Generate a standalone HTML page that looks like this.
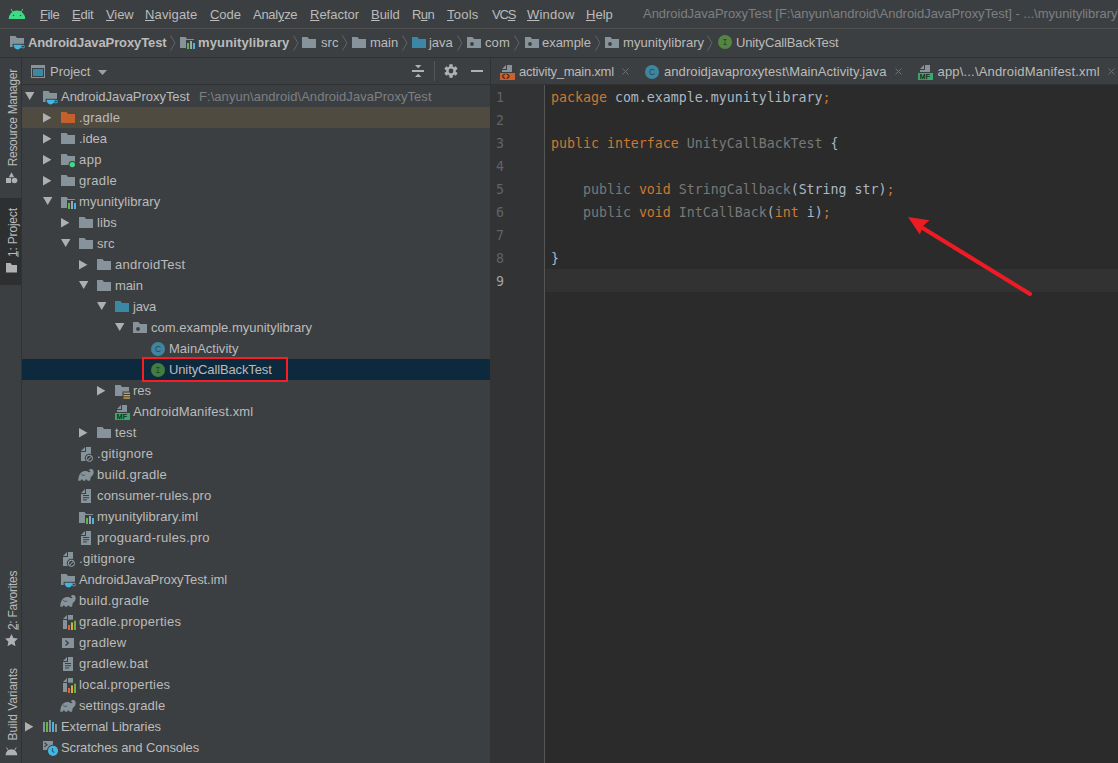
<!DOCTYPE html>
<html><head><meta charset="utf-8"><title>AndroidJavaProxyTest</title>
<style>
html,body{margin:0;padding:0;background:#3c3f41;}
body{width:1118px;height:763px;position:relative;overflow:hidden;font-family:"Liberation Sans",sans-serif;font-size:13px;color:#bbbbbb;}
.abs{position:absolute}
svg{display:block}
u{text-decoration:underline;text-underline-offset:1px}
#menubar{position:absolute;left:0;top:0;width:1118px;height:28px;background:#3c3f41;border-bottom:1px solid #515151;}
.mi{position:absolute;top:7px;white-space:nowrap;line-height:16px;font-size:13px}
#title{position:absolute;left:643px;top:6px;white-space:nowrap;line-height:16px;color:#7d7f81;font-size:13px;letter-spacing:-0.030px}
#navbar{position:absolute;left:0;top:29px;width:1118px;height:28px;background:#3c3f41;border-bottom:1px solid #323232;}
.ico{position:absolute;top:3px;width:16px;height:16px}
.nt{position:absolute;top:6px;line-height:16px;white-space:nowrap;font-size:13px}
.nt.b{font-weight:bold}
.sep{position:absolute;top:6px}
#strip{position:absolute;left:0;top:58px;width:21px;height:705px;background:#3c3f41;border-right:1px solid #323232}
.vt{position:absolute;left:0;width:21px;white-space:nowrap;font-size:12px;line-height:21px;transform-origin:0 0;transform:rotate(-90deg);}
#proj{position:absolute;left:22px;top:58px;width:468px;height:705px;background:#3c3f41;}
#projhdr{position:absolute;left:22px;top:58px;width:468px;height:26px;border-bottom:1px solid #323232}
#tree{position:absolute;left:0;top:0;width:490px;height:763px;}
.row{position:absolute;left:22px;width:468px;height:21px;}
.row > *{margin-left:-22px}
.row.excl{background:#4f4b41}
.row.sel{background:#0d293e}
.lbl{position:absolute;top:3px;line-height:16px;white-space:nowrap;font-size:13px}
.dim{color:#7d8082}
.arw{position:absolute}
#divider{position:absolute;left:490px;top:58px;width:1px;height:705px;background:#323232}
#editor{position:absolute;left:491px;top:58px;width:627px;height:705px;background:#2b2b2b}
#tabs{position:absolute;left:0;top:0;width:627px;height:26px;background:#3c3f41;border-bottom:1px solid #323232}
.tab{position:absolute;top:6px;line-height:16px;white-space:nowrap;font-size:13px}
.tx{position:absolute;top:10px}
#gutter{position:absolute;left:491px;top:85px;width:53px;height:678px;background:#313335;border-right:1px solid #555555}
.num{position:absolute;left:496px;width:30px;height:23px;line-height:23px;font-family:"DejaVu Sans Mono","Liberation Mono",monospace;font-size:13.280px;color:#606366}
.num.cur{color:#a4a3a3}
#caret{position:absolute;left:491px;top:269px;width:627px;height:23px;background:#323232}
.cl{position:absolute;left:551px;height:23px;line-height:23px;white-space:pre;font-family:"DejaVu Sans Mono","Liberation Mono",monospace;font-size:13.280px;color:#a9b7c6}
.k{color:#cc7832}
.g{color:#787878}
</style></head><body>
<div id="menubar"><svg width="20" height="13" viewBox="7 8 20 13" style="position:absolute;left:7px;top:8px"><path d="M8.7 19.1a8.250 8.5 0 0 1 16.5 0z" fill="#3ddc84"/><path d="M12.900 12.4L11.3 9.3M21.000 12.4L22.6 9.3" stroke="#3ddc84" stroke-width="0.900" stroke-linecap="round"/><circle cx="13.5" cy="15.4" r="0.750" fill="#3c3f41"/><circle cx="20.5" cy="15.4" r="0.750" fill="#3c3f41"/></svg><span class="mi" id="m0" style="left:40px;letter-spacing:-0.442px"><u>F</u>ile</span><span class="mi" id="m1" style="left:72px;letter-spacing:-0.227px"><u>E</u>dit</span><span class="mi" id="m2" style="left:106px;letter-spacing:-0.088px"><u>V</u>iew</span><span class="mi" id="m3" style="left:145px;letter-spacing:0.136px"><u>N</u>avigate</span><span class="mi" id="m4" style="left:210px;letter-spacing:-0.048px"><u>C</u>ode</span><span class="mi" id="m5" style="left:253px;letter-spacing:-0.281px">Anal<u>y</u>ze</span><span class="mi" id="m6" style="left:310px;letter-spacing:-0.005px"><u>R</u>efactor</span><span class="mi" id="m7" style="left:371px;letter-spacing:-0.044px"><u>B</u>uild</span><span class="mi" id="m8" style="left:412px;letter-spacing:-0.586px">R<u>u</u>n</span><span class="mi" id="m9" style="left:447px;letter-spacing:0.248px"><u>T</u>ools</span><span class="mi" id="m10" style="left:492px;letter-spacing:-1.145px">VC<u>S</u></span><span class="mi" id="m11" style="left:527px;letter-spacing:0.208px"><u>W</u>indow</span><span class="mi" id="m12" style="left:586px;letter-spacing:0.012px"><u>H</u>elp</span><span id="title">AndroidJavaProxyTest [F:\anyun\android\AndroidJavaProxyTest] - ...\myunitylibrary\src\main\java\com\example\myunitylibrary\UnityCallBackTest.java</span></div>
<div id="navbar"><span class="ico" style="left:9px;top:5px"><svg class="ic" width="16" height="16" viewBox="0 0 16 16" style=""><path d="M1 2h5.5l1.5 2H15v9H1z" fill="#87939a"/><path d="M3.6 9.800H16v6.2H3.6z" fill="#3c3f41"/><path d="M4.6 10.800h8c0 2.7-1.6 4.7-4 4.7s-4-2-4-4.7z" fill="#40b6e0"/><ellipse cx="13.800" cy="12.6" rx="1.800" ry="1.3" fill="none" stroke="#40b6e0" stroke-width="0.900"/></svg></span><span class="nt b" id="n0" style="left:28px;letter-spacing:-0.107px">AndroidJavaProxyTest</span><span class="ico" style="left:179px;top:6px"><svg class="ic" width="16" height="16" viewBox="0 0 16 16" style=""><path d="M1 2h5.5l1.5 2H15v9H1z" fill="#87939a"/><rect x="7" y="5" width="9" height="9" fill="#3c3f41"/><rect x="8" y="8" width="2" height="6" fill="#62b543"/><rect x="11" y="6" width="2" height="8" fill="#9aa7b0"/><rect x="14" y="8" width="2" height="6" fill="#40b6e0"/></svg></span><span class="nt b" id="n1" style="left:198px;letter-spacing:0.136px">myunitylibrary</span><span class="ico" style="left:301px;top:6px"><svg class="ic" width="16" height="16" viewBox="0 0 16 16" style=""><path d="M1 2h5.5l1.5 2H15v9H1z" fill="#87939a"/></svg></span><span class="nt" id="n2" style="left:321px;letter-spacing:0.052px">src</span><span class="ico" style="left:351px;top:6px"><svg class="ic" width="16" height="16" viewBox="0 0 16 16" style=""><path d="M1 2h5.5l1.5 2H15v9H1z" fill="#87939a"/></svg></span><span class="nt" id="n3" style="left:370px;letter-spacing:-0.022px">main</span><span class="ico" style="left:411px;top:6px"><svg class="ic" width="16" height="16" viewBox="0 0 16 16" style=""><path d="M1 2h5.5l1.5 2H15v9H1z" fill="#3a87a6"/></svg></span><span class="nt" id="n4" style="left:429px;letter-spacing:-0.015px">java</span><span class="ico" style="left:466px;top:6px"><svg class="ic" width="16" height="16" viewBox="0 0 16 16" style=""><path d="M1 2h5.5l1.5 2H15v9H1z" fill="#87939a"/><circle cx="6" cy="9" r="1.9" fill="#3c3f41"/></svg></span><span class="nt" id="n5" style="left:485px;letter-spacing:0.079px">com</span><span class="ico" style="left:524px;top:6px"><svg class="ic" width="16" height="16" viewBox="0 0 16 16" style=""><path d="M1 2h5.5l1.5 2H15v9H1z" fill="#87939a"/><circle cx="6" cy="9" r="1.9" fill="#3c3f41"/></svg></span><span class="nt" id="n6" style="left:542px;letter-spacing:-0.034px">example</span><span class="ico" style="left:604px;top:6px"><svg class="ic" width="16" height="16" viewBox="0 0 16 16" style=""><path d="M1 2h5.5l1.5 2H15v9H1z" fill="#87939a"/><circle cx="6" cy="9" r="1.9" fill="#3c3f41"/></svg></span><span class="nt" id="n7" style="left:623px;letter-spacing:0.072px">myunitylibrary</span><span class="ico" style="left:717px;top:5px"><svg class="ic" width="16" height="16" viewBox="0 0 16 16" style=""><circle cx="8" cy="8" r="7" fill="#62b543" fill-opacity=".6"/><text x="8" y="11" text-anchor="middle" font-family="Liberation Mono, monospace" font-size="9" fill="#231f20" fill-opacity=".7">I</text></svg></span><span class="nt" id="n8" style="left:736px;letter-spacing:-0.133px">UnityCallBackTest</span><span class="sep" style="left:170px"><svg width="6" height="16" viewBox="0 0 6 16"><path d="M0.5 0.5L5 8L0.5 15.5" fill="none" stroke="#616567" stroke-width="1"/></svg></span><span class="sep" style="left:293px"><svg width="6" height="16" viewBox="0 0 6 16"><path d="M0.5 0.5L5 8L0.5 15.5" fill="none" stroke="#616567" stroke-width="1"/></svg></span><span class="sep" style="left:342px"><svg width="6" height="16" viewBox="0 0 6 16"><path d="M0.5 0.5L5 8L0.5 15.5" fill="none" stroke="#616567" stroke-width="1"/></svg></span><span class="sep" style="left:402px"><svg width="6" height="16" viewBox="0 0 6 16"><path d="M0.5 0.5L5 8L0.5 15.5" fill="none" stroke="#616567" stroke-width="1"/></svg></span><span class="sep" style="left:457px"><svg width="6" height="16" viewBox="0 0 6 16"><path d="M0.5 0.5L5 8L0.5 15.5" fill="none" stroke="#616567" stroke-width="1"/></svg></span><span class="sep" style="left:514px"><svg width="6" height="16" viewBox="0 0 6 16"><path d="M0.5 0.5L5 8L0.5 15.5" fill="none" stroke="#616567" stroke-width="1"/></svg></span><span class="sep" style="left:595px"><svg width="6" height="16" viewBox="0 0 6 16"><path d="M0.5 0.5L5 8L0.5 15.5" fill="none" stroke="#616567" stroke-width="1"/></svg></span><span class="sep" style="left:707px"><svg width="6" height="16" viewBox="0 0 6 16"><path d="M0.5 0.5L5 8L0.5 15.5" fill="none" stroke="#616567" stroke-width="1"/></svg></span></div>
<div id="strip"></div>
<svg class="abs" style="left:0;top:58px" width="21" height="705" viewBox="0 58 21 705" font-family="Liberation Sans, sans-serif" font-size="12" fill="#bbbbbb">
 <rect x="0" y="198" width="21" height="87" fill="#2d2f30"/>
 <text transform="translate(16.5 166.3) rotate(-90)" textLength="97.5" lengthAdjust="spacing">Resource Manager</text>
 <path d="M11.5 172.3l2.7 4.900H8.800z" fill="#afb1b3"/><rect x="6" y="178" width="5" height="5" fill="#afb1b3"/><circle cx="14.5" cy="180.5" r="2.800" fill="#afb1b3"/>
 <text transform="translate(16.5 257) rotate(-90)" textLength="49" lengthAdjust="spacing">1: Project</text>
 <rect x="17.5" y="251.5" width="1" height="5.5" fill="#bbbbbb"/>
 <path d="M6 263h4.5l1.5 2H17v7.5H6z" fill="#afb1b3"/>
 <text transform="translate(16.5 630) rotate(-90)" textLength="59.5" lengthAdjust="spacing">2: Favorites</text>
 <rect x="17.5" y="624" width="1" height="6" fill="#bbbbbb"/>
 <path d="M11.5 634l1.900 4.1 4.5.5-3.3 3.1.9 4.5-4-2.3-4 2.3.9-4.5-3.3-3.1 4.5-.5z" fill="#afb1b3"/>
 <text transform="translate(16.5 740.5) rotate(-90)" textLength="72.5" lengthAdjust="spacing">Build Variants</text>
 <path d="M5.5 755.3a5.900 6 0 0 1 11.800 0z" fill="#afb1b3"/><path d="M8.3 750.5L6.800 747.800M14.5 750.5L16 747.800" stroke="#afb1b3" stroke-width="0.900" stroke-linecap="round"/>
</svg>
<div id="proj"></div>
<div id="projhdr">
 <svg class="abs" style="left:9px;top:7px" width="14" height="13" viewBox="0 0 14 13"><rect x=".5" y=".5" width="13" height="12" fill="#3c3f41" stroke="#87939a"/><rect x="1" y="1" width="12" height="2" fill="#87939a"/><rect x="2" y="4" width="10" height="7" fill="#3a87a6"/></svg>
 <span class="lbl" id="ph" style="left:28px;top:6px">Project</span>
 <svg class="abs" style="left:76px;top:12px" width="9" height="5" viewBox="0 0 9 5"><path d="M0 0h9L4.5 5z" fill="#9da0a2"/></svg>
 <svg class="abs" style="left:374px;top:0px" width="94" height="26" viewBox="396 58 94 26"><rect x="412" y="70" width="12" height="2" fill="#afb1b3"/><path d="M415 65h6.4l-3.2 3.2zM415 77h6.4l-3.2-3.2z" fill="#afb1b3"/><rect x="434" y="61" width="1" height="20" fill="#555555"/><path d="M449.47 66.66L449.69 64.53L452.31 64.53L452.53 66.66L453.99 67.50L455.95 66.63L457.26 68.90L455.52 70.16L455.52 71.84L457.26 73.10L455.95 75.37L453.99 74.50L452.53 75.34L452.31 77.47L449.69 77.47L449.47 75.34L448.01 74.50L446.05 75.37L444.74 73.10L446.48 71.84L446.48 70.16L444.74 68.90L446.05 66.63L448.01 67.50z" fill="#afb1b3" stroke="#afb1b3" stroke-width="0.6" stroke-linejoin="round"/><circle cx="451" cy="71" r="2.4" fill="#3c3f41"/><rect x="471" y="70" width="12" height="2" fill="#afb1b3"/></svg>
</div>
<div id="tree">
<div class="row" style="top:86px"><span class="arw" style="left:24.799999999999997px;top:5.9px"><svg class="ar" width="10" height="9" viewBox="0 0 10 9"><path d="M0 0H9.4L4.7 8z" fill="#adafb1"/></svg></span><span class="ico" style="left:42px"><svg class="ic" width="16" height="16" viewBox="0 0 16 16" style=""><path d="M1 2h5.5l1.5 2H15v9H1z" fill="#87939a"/><path d="M3.6 9.800H16v6.2H3.6z" fill="#3c3f41"/><path d="M4.6 10.800h8c0 2.7-1.6 4.7-4 4.7s-4-2-4-4.7z" fill="#40b6e0"/><ellipse cx="13.800" cy="12.6" rx="1.800" ry="1.3" fill="none" stroke="#40b6e0" stroke-width="0.900"/></svg></span><span class="lbl" id="t0" style="left:61px;letter-spacing:-0.037px">AndroidJavaProxyTest</span><span class="lbl dim" id="t0x" style="left:199px;letter-spacing:0.056px">F:\anyun\android\AndroidJavaProxyTest</span></div>
<div class="row excl" style="top:107px"><span class="arw" style="left:43px;top:5.6px"><svg class="ar" width="9" height="10" viewBox="0 0 9 10"><path d="M0 0L8.4 4.750L0 9.5z" fill="#adafb1"/></svg></span><span class="ico" style="left:60px"><svg class="ic" width="16" height="16" viewBox="0 0 16 16" style=""><path d="M1 2h5.5l1.5 2H15v9H1z" fill="#c4602b"/></svg></span><span class="lbl" id="t1" style="left:79px;letter-spacing:0.207px">.gradle</span></div>
<div class="row" style="top:128px"><span class="arw" style="left:43px;top:5.6px"><svg class="ar" width="9" height="10" viewBox="0 0 9 10"><path d="M0 0L8.4 4.750L0 9.5z" fill="#adafb1"/></svg></span><span class="ico" style="left:60px"><svg class="ic" width="16" height="16" viewBox="0 0 16 16" style=""><path d="M1 2h5.5l1.5 2H15v9H1z" fill="#87939a"/></svg></span><span class="lbl" id="t2" style="left:79px;letter-spacing:-0.061px">.idea</span></div>
<div class="row" style="top:149px"><span class="arw" style="left:43px;top:5.6px"><svg class="ar" width="9" height="10" viewBox="0 0 9 10"><path d="M0 0L8.4 4.750L0 9.5z" fill="#adafb1"/></svg></span><span class="ico" style="left:60px"><svg class="ic" width="16" height="16" viewBox="0 0 16 16" style=""><path d="M1 2h5.5l1.5 2H15v9H1z" fill="#87939a"/><circle cx="12.3" cy="12.6" r="3.7" fill="#3c3f41"/><circle cx="12.3" cy="12.6" r="2.7" fill="#3ddc84"/></svg></span><span class="lbl" id="t3" style="left:79px;letter-spacing:0.399px">app</span></div>
<div class="row" style="top:170px"><span class="arw" style="left:43px;top:5.6px"><svg class="ar" width="9" height="10" viewBox="0 0 9 10"><path d="M0 0L8.4 4.750L0 9.5z" fill="#adafb1"/></svg></span><span class="ico" style="left:60px"><svg class="ic" width="16" height="16" viewBox="0 0 16 16" style=""><path d="M1 2h5.5l1.5 2H15v9H1z" fill="#87939a"/></svg></span><span class="lbl" id="t4" style="left:79px;letter-spacing:0.343px">gradle</span></div>
<div class="row" style="top:191px"><span class="arw" style="left:42.8px;top:5.9px"><svg class="ar" width="10" height="9" viewBox="0 0 10 9"><path d="M0 0H9.4L4.7 8z" fill="#adafb1"/></svg></span><span class="ico" style="left:60px;top:4px"><svg class="ic" width="16" height="16" viewBox="0 0 16 16" style=""><path d="M1 2h5.5l1.5 2H15v9H1z" fill="#87939a"/><rect x="7" y="5" width="9" height="9" fill="#3c3f41"/><rect x="8" y="8" width="2" height="6" fill="#62b543"/><rect x="11" y="6" width="2" height="8" fill="#9aa7b0"/><rect x="14" y="8" width="2" height="6" fill="#40b6e0"/></svg></span><span class="lbl" id="t5" style="left:79px;letter-spacing:0.079px">myunitylibrary</span></div>
<div class="row" style="top:212px"><span class="arw" style="left:61px;top:5.6px"><svg class="ar" width="9" height="10" viewBox="0 0 9 10"><path d="M0 0L8.4 4.750L0 9.5z" fill="#adafb1"/></svg></span><span class="ico" style="left:78px"><svg class="ic" width="16" height="16" viewBox="0 0 16 16" style=""><path d="M1 2h5.5l1.5 2H15v9H1z" fill="#87939a"/></svg></span><span class="lbl" id="t6" style="left:97px;letter-spacing:0.121px">libs</span></div>
<div class="row" style="top:233px"><span class="arw" style="left:60.8px;top:5.9px"><svg class="ar" width="10" height="9" viewBox="0 0 10 9"><path d="M0 0H9.4L4.7 8z" fill="#adafb1"/></svg></span><span class="ico" style="left:78px"><svg class="ic" width="16" height="16" viewBox="0 0 16 16" style=""><path d="M1 2h5.5l1.5 2H15v9H1z" fill="#87939a"/></svg></span><span class="lbl" id="t7" style="left:97px;letter-spacing:0.052px">src</span></div>
<div class="row" style="top:254px"><span class="arw" style="left:79px;top:5.6px"><svg class="ar" width="9" height="10" viewBox="0 0 9 10"><path d="M0 0L8.4 4.750L0 9.5z" fill="#adafb1"/></svg></span><span class="ico" style="left:96px"><svg class="ic" width="16" height="16" viewBox="0 0 16 16" style=""><path d="M1 2h5.5l1.5 2H15v9H1z" fill="#87939a"/></svg></span><span class="lbl" id="t8" style="left:115px;letter-spacing:0.298px">androidTest</span></div>
<div class="row" style="top:275px"><span class="arw" style="left:78.8px;top:5.9px"><svg class="ar" width="10" height="9" viewBox="0 0 10 9"><path d="M0 0H9.4L4.7 8z" fill="#adafb1"/></svg></span><span class="ico" style="left:96px"><svg class="ic" width="16" height="16" viewBox="0 0 16 16" style=""><path d="M1 2h5.5l1.5 2H15v9H1z" fill="#87939a"/></svg></span><span class="lbl" id="t9" style="left:115px;letter-spacing:-0.097px">main</span></div>
<div class="row" style="top:296px"><span class="arw" style="left:96.8px;top:5.9px"><svg class="ar" width="10" height="9" viewBox="0 0 10 9"><path d="M0 0H9.4L4.7 8z" fill="#adafb1"/></svg></span><span class="ico" style="left:114px"><svg class="ic" width="16" height="16" viewBox="0 0 16 16" style=""><path d="M1 2h5.5l1.5 2H15v9H1z" fill="#3a87a6"/></svg></span><span class="lbl" id="t10" style="left:133px;letter-spacing:-0.19px">java</span></div>
<div class="row" style="top:317px"><span class="arw" style="left:114.8px;top:5.9px"><svg class="ar" width="10" height="9" viewBox="0 0 10 9"><path d="M0 0H9.4L4.7 8z" fill="#adafb1"/></svg></span><span class="ico" style="left:132px"><svg class="ic" width="16" height="16" viewBox="0 0 16 16" style=""><path d="M1 2h5.5l1.5 2H15v9H1z" fill="#87939a"/><circle cx="6" cy="9" r="1.9" fill="#3c3f41"/></svg></span><span class="lbl" id="t11" style="left:151px">com.example.myunitylibrary</span></div>
<div class="row" style="top:338px"><span class="ico" style="left:150px"><svg class="ic" width="16" height="16" viewBox="0 0 16 16" style=""><circle cx="8" cy="8" r="7" fill="#40b6e0" fill-opacity=".6"/><text x="8" y="11" text-anchor="middle" font-family="Liberation Sans, monospace" font-size="8.5" fill="#231f20" fill-opacity=".7">C</text></svg></span><span class="lbl" id="t12" style="left:169px;letter-spacing:0.003px">MainActivity</span></div>
<div class="row sel" style="top:359px"><span class="ico" style="left:150px"><svg class="ic" width="16" height="16" viewBox="0 0 16 16" style=""><circle cx="8" cy="8" r="7" fill="#62b543" fill-opacity=".6"/><text x="8" y="11" text-anchor="middle" font-family="Liberation Mono, monospace" font-size="9" fill="#231f20" fill-opacity=".7">I</text></svg></span><span class="lbl" id="t13" style="left:169px;letter-spacing:-0.122px">UnityCallBackTest</span></div>
<div class="row" style="top:380px"><span class="arw" style="left:97px;top:5.6px"><svg class="ar" width="9" height="10" viewBox="0 0 9 10"><path d="M0 0L8.4 4.750L0 9.5z" fill="#adafb1"/></svg></span><span class="ico" style="left:114px"><svg class="ic" width="16" height="16" viewBox="0 0 16 16" style=""><path d="M1 2h5.5l1.5 2H15v9H1z" fill="#87939a"/><rect x="8.5" y="8.5" width="7.5" height="7.5" fill="#3c3f41"/><rect x="9.5" y="9.6" width="6.5" height="1.3" fill="#d9a343"/><rect x="9.5" y="12" width="6.5" height="1.3" fill="#d9a343"/><rect x="9.5" y="14.4" width="6.5" height="1.3" fill="#d9a343"/></svg></span><span class="lbl" id="t14" style="left:133px;letter-spacing:0.012px">res</span></div>
<div class="row" style="top:401px"><span class="ico" style="left:114px"><svg class="ic" width="16" height="16" viewBox="0 0 16 16" style=""><path d="M8 1h5v7H3V6h5z" fill="#87939a"/><path d="M7 1L3 5h4z" fill="#87939a"/><rect x="1" y="9" width="15" height="7" fill="#3ba86c"/><text x="2.7" y="14.900" font-family="Liberation Sans, sans-serif" font-size="6.900" letter-spacing="0.3" fill="#152a1e" stroke="#152a1e" stroke-width="0.250">MF</text></svg></span><span class="lbl" id="t15" style="left:133px;letter-spacing:0.133px">AndroidManifest.xml</span></div>
<div class="row" style="top:422px"><span class="arw" style="left:79px;top:5.6px"><svg class="ar" width="9" height="10" viewBox="0 0 9 10"><path d="M0 0L8.4 4.750L0 9.5z" fill="#adafb1"/></svg></span><span class="ico" style="left:96px"><svg class="ic" width="16" height="16" viewBox="0 0 16 16" style=""><path d="M1 2h5.5l1.5 2H15v9H1z" fill="#87939a"/></svg></span><span class="lbl" id="t16" style="left:115px;letter-spacing:0.133px">test</span></div>
<div class="row" style="top:443px"><span class="ico" style="left:78px"><svg class="ic" width="16" height="16" viewBox="0 0 16 16" style=""><path d="M8 1h5v14H3V6h5z" fill="#87939a"/><path d="M7 1L3 5h4z" fill="#87939a"/><circle cx="11.4" cy="12.3" r="4.6" fill="#3c3f41"/><circle cx="11.4" cy="12.3" r="3.1" fill="none" stroke="#9aa7b0" stroke-width="1"/><path d="M9.3 14.4l4.2-4.2" stroke="#9aa7b0" stroke-width="1"/></svg></span><span class="lbl" id="t17" style="left:97px;letter-spacing:0.282px">.gitignore</span></div>
<div class="row" style="top:464px"><span class="ico" style="left:78px"><svg class="ic" width="16" height="16" viewBox="0 0 16 16" style=""><path d="M0.3 13.800C0.3 9 2.5 4.2 7 4.1C8.5 4.1 10 4.5 11 5.2C11.800 5 12.6 4.7 12.6 4.3C12.6 3.900 11.5 4 11 3.4C11 2.5 12.2 2 13.3 2C14.800 2 15.7 3.5 15.7 5.2C15.7 7.5 14 9 12.800 10L12 13.800L9.5 13.800C9.5 13 9 12.5 8.3 12.5C7.6 12.5 7.2 13 7.2 13.800L5 13.800C5 13 4.5 12.5 3.800 12.5C3.1 12.5 2.7 13 2.7 13.800Z" fill="#87939a"/><path d="M3.2 6.800C3.6 8.4 5.6 9.2 7.2 7.800" fill="none" stroke="#3c3f41" stroke-width="0.7"/></svg></span><span class="lbl" id="t18" style="left:97px;letter-spacing:0.232px">build.gradle</span></div>
<div class="row" style="top:485px"><span class="ico" style="left:78px"><svg class="ic" width="16" height="16" viewBox="0 0 16 16" style=""><path d="M8 1h5v14H3V6h5z" fill="#87939a"/><path d="M7 1L3 5h4z" fill="#87939a"/><rect x="5" y="7" width="6" height="1" fill="#3c3f41"/><rect x="5" y="9.2" width="6" height="1" fill="#3c3f41"/><rect x="5" y="11.4" width="4" height="1" fill="#3c3f41"/></svg></span><span class="lbl" id="t19" style="left:97px;letter-spacing:0.133px">consumer-rules.pro</span></div>
<div class="row" style="top:506px"><span class="ico" style="left:78px;top:4px"><svg class="ic" width="16" height="16" viewBox="0 0 16 16" style=""><path d="M1 2h5.5l1.5 2H15v9H1z" fill="#87939a"/><rect x="7" y="5" width="9" height="9" fill="#3c3f41"/><rect x="8" y="8" width="2" height="6" fill="#62b543"/><rect x="11" y="6" width="2" height="8" fill="#9aa7b0"/><rect x="14" y="8" width="2" height="6" fill="#40b6e0"/></svg></span><span class="lbl" id="t20" style="left:97px;letter-spacing:0.103px">myunitylibrary.iml</span></div>
<div class="row" style="top:527px"><span class="ico" style="left:78px"><svg class="ic" width="16" height="16" viewBox="0 0 16 16" style=""><path d="M8 1h5v14H3V6h5z" fill="#87939a"/><path d="M7 1L3 5h4z" fill="#87939a"/><rect x="5" y="7" width="6" height="1" fill="#3c3f41"/><rect x="5" y="9.2" width="6" height="1" fill="#3c3f41"/><rect x="5" y="11.4" width="4" height="1" fill="#3c3f41"/></svg></span><span class="lbl" id="t21" style="left:97px;letter-spacing:0.33px">proguard-rules.pro</span></div>
<div class="row" style="top:548px"><span class="ico" style="left:60px"><svg class="ic" width="16" height="16" viewBox="0 0 16 16" style=""><path d="M8 1h5v14H3V6h5z" fill="#87939a"/><path d="M7 1L3 5h4z" fill="#87939a"/><circle cx="11.4" cy="12.3" r="4.6" fill="#3c3f41"/><circle cx="11.4" cy="12.3" r="3.1" fill="none" stroke="#9aa7b0" stroke-width="1"/><path d="M9.3 14.4l4.2-4.2" stroke="#9aa7b0" stroke-width="1"/></svg></span><span class="lbl" id="t22" style="left:79px;letter-spacing:0.272px">.gitignore</span></div>
<div class="row" style="top:569px"><span class="ico" style="left:60px"><svg class="ic" width="16" height="16" viewBox="0 0 16 16" style=""><path d="M1 2h5.5l1.5 2H15v9H1z" fill="#87939a"/><path d="M3.6 9.800H16v6.2H3.6z" fill="#3c3f41"/><path d="M4.6 10.800h8c0 2.7-1.6 4.7-4 4.7s-4-2-4-4.7z" fill="#40b6e0"/><ellipse cx="13.800" cy="12.6" rx="1.800" ry="1.3" fill="none" stroke="#40b6e0" stroke-width="0.900"/></svg></span><span class="lbl" id="t23" style="left:79px;letter-spacing:-0.061px">AndroidJavaProxyTest.iml</span></div>
<div class="row" style="top:590px"><span class="ico" style="left:60px"><svg class="ic" width="16" height="16" viewBox="0 0 16 16" style=""><path d="M0.3 13.800C0.3 9 2.5 4.2 7 4.1C8.5 4.1 10 4.5 11 5.2C11.800 5 12.6 4.7 12.6 4.3C12.6 3.900 11.5 4 11 3.4C11 2.5 12.2 2 13.3 2C14.800 2 15.7 3.5 15.7 5.2C15.7 7.5 14 9 12.800 10L12 13.800L9.5 13.800C9.5 13 9 12.5 8.3 12.5C7.6 12.5 7.2 13 7.2 13.800L5 13.800C5 13 4.5 12.5 3.800 12.5C3.1 12.5 2.7 13 2.7 13.800Z" fill="#87939a"/><path d="M3.2 6.800C3.6 8.4 5.6 9.2 7.2 7.800" fill="none" stroke="#3c3f41" stroke-width="0.7"/></svg></span><span class="lbl" id="t24" style="left:79px;letter-spacing:0.257px">build.gradle</span></div>
<div class="row" style="top:611px"><span class="ico" style="left:60px"><svg class="ic" width="16" height="16" viewBox="0 0 16 16" style=""><path d="M8 1h5v14H3V6h5z" fill="#87939a"/><path d="M7 1L3 5h4z" fill="#87939a"/><rect x="7" y="5.7" width="9" height="10.3" fill="#3c3f41"/><rect x="8" y="11" width="2" height="5" fill="#e8632b"/><rect x="11" y="8.4" width="2" height="7.6" fill="#e9a53b"/><rect x="14" y="6.7" width="2" height="9.3" fill="#62b543"/></svg></span><span class="lbl" id="t25" style="left:79px;letter-spacing:0.279px">gradle.properties</span></div>
<div class="row" style="top:632px"><span class="ico" style="left:60px"><svg class="ic" width="16" height="16" viewBox="0 0 16 16" style=""><rect x="2" y="3" width="12" height="10" fill="#87939a"/><path d="M5.5 5.5L8.3 8l-2.800 2.5" fill="none" stroke="#3c3f41" stroke-width="1.4"/></svg></span><span class="lbl" id="t26" style="left:79px;letter-spacing:0.281px">gradlew</span></div>
<div class="row" style="top:653px"><span class="ico" style="left:60px"><svg class="ic" width="16" height="16" viewBox="0 0 16 16" style=""><path d="M8 1h5v14H3V6h5z" fill="#87939a"/><path d="M7 1L3 5h4z" fill="#87939a"/><rect x="5" y="7" width="6" height="1" fill="#3c3f41"/><rect x="5" y="9.2" width="6" height="1" fill="#3c3f41"/><rect x="5" y="11.4" width="4" height="1" fill="#3c3f41"/></svg></span><span class="lbl" id="t27" style="left:79px;letter-spacing:0.255px">gradlew.bat</span></div>
<div class="row" style="top:674px"><span class="ico" style="left:60px"><svg class="ic" width="16" height="16" viewBox="0 0 16 16" style=""><path d="M8 1h5v14H3V6h5z" fill="#87939a"/><path d="M7 1L3 5h4z" fill="#87939a"/><rect x="7" y="5.7" width="9" height="10.3" fill="#3c3f41"/><rect x="8" y="11" width="2" height="5" fill="#e8632b"/><rect x="11" y="8.4" width="2" height="7.6" fill="#e9a53b"/><rect x="14" y="6.7" width="2" height="9.3" fill="#62b543"/></svg></span><span class="lbl" id="t28" style="left:79px;letter-spacing:0.196px">local.properties</span></div>
<div class="row" style="top:695px"><span class="ico" style="left:60px"><svg class="ic" width="16" height="16" viewBox="0 0 16 16" style=""><path d="M0.3 13.800C0.3 9 2.5 4.2 7 4.1C8.5 4.1 10 4.5 11 5.2C11.800 5 12.6 4.7 12.6 4.3C12.6 3.900 11.5 4 11 3.4C11 2.5 12.2 2 13.3 2C14.800 2 15.7 3.5 15.7 5.2C15.7 7.5 14 9 12.800 10L12 13.800L9.5 13.800C9.5 13 9 12.5 8.3 12.5C7.6 12.5 7.2 13 7.2 13.800L5 13.800C5 13 4.5 12.5 3.800 12.5C3.1 12.5 2.7 13 2.7 13.800Z" fill="#87939a"/><path d="M3.2 6.800C3.6 8.4 5.6 9.2 7.2 7.800" fill="none" stroke="#3c3f41" stroke-width="0.7"/></svg></span><span class="lbl" id="t29" style="left:79px;letter-spacing:0.116px">settings.gradle</span></div>
<div class="row" style="top:716px"><span class="arw" style="left:25px;top:5.6px"><svg class="ar" width="9" height="10" viewBox="0 0 9 10"><path d="M0 0L8.4 4.750L0 9.5z" fill="#adafb1"/></svg></span><span class="ico" style="left:42px"><svg class="ic" width="16" height="16" viewBox="0 0 16 16" style=""><rect x="1" y="3" width="2" height="10" fill="#87939a"/><rect x="4" y="3" width="2" height="10" fill="#62b543"/><rect x="7" y="1" width="2" height="12" fill="#87939a"/><rect x="10" y="3" width="2" height="10" fill="#40b6e0"/><rect x="13" y="5" width="2" height="8" fill="#87939a"/></svg></span><span class="lbl" id="t30" style="left:61px;letter-spacing:-0.064px">External Libraries</span></div>
<div class="row" style="top:737px"><span class="ico" style="left:42px"><svg class="ic" width="16" height="16" viewBox="0 0 16 16" style=""><rect x="1" y="1" width="10" height="9" fill="#87939a"/><path d="M2.5 2.800l2.5 2-2.5 2" fill="none" stroke="#3c3f41" stroke-width="1.1"/><circle cx="11" cy="10.800" r="6" fill="#3c3f41"/><circle cx="11" cy="10.800" r="5.1" fill="#40b6e0"/><path d="M10.5 8.3v2.800l1.800 1.5" fill="none" stroke="#2f5a6e" stroke-width="1.2"/></svg></span><span class="lbl" id="t31" style="left:61px;letter-spacing:-0.128px">Scratches and Consoles</span></div>
<div class="abs" style="left:142px;top:357px;width:142px;height:21px;border:2px solid #f91d25"></div>
</div>
<div id="divider"></div>
<div id="editor">
 <div id="tabs">
  <span class="ico" style="left:8px;top:6px"><svg class="ic" width="16" height="16" viewBox="0 0 16 16" style=""><path d="M8 1h5v7H3V6h5z" fill="#87939a"/><path d="M7 1L3 5h4z" fill="#87939a"/><rect x="1" y="9" width="15" height="7" fill="#c9622c"/><text transform="translate(2.7 15.800) scale(0.560 1)" font-family="Liberation Sans, sans-serif" font-size="10" font-weight="bold" letter-spacing="2.4" fill="#2e1d14">&lt;&gt;</text></svg></span><span class="tab" id="tb0" style="left:28px;letter-spacing:-0.245px">activity_main.xml</span>
  <svg class="tx" style="left:131px" width="7" height="7" viewBox="0 0 7 7"><path d="M.5 .5l6 6M6.5 .5l-6 6" stroke="#6e7173" stroke-width="1"/></svg>
  <span class="ico" style="left:153px;top:6px"><svg class="ic" width="16" height="16" viewBox="0 0 16 16" style=""><circle cx="8" cy="8" r="7" fill="#40b6e0" fill-opacity=".6"/><text x="8" y="11" text-anchor="middle" font-family="Liberation Sans, monospace" font-size="8.5" fill="#231f20" fill-opacity=".7">C</text></svg></span><span class="tab" id="tb1" style="left:173px;letter-spacing:0.081px">androidjavaproxytest\MainActivity.java</span>
  <svg class="tx" style="left:403.5px" width="7" height="7" viewBox="0 0 7 7"><path d="M.5 .5l6 6M6.5 .5l-6 6" stroke="#6e7173" stroke-width="1"/></svg>
  <span class="ico" style="left:426px;top:6px"><svg class="ic" width="16" height="16" viewBox="0 0 16 16" style=""><path d="M8 1h5v7H3V6h5z" fill="#87939a"/><path d="M7 1L3 5h4z" fill="#87939a"/><rect x="1" y="9" width="15" height="7" fill="#3ba86c"/><text x="2.7" y="14.900" font-family="Liberation Sans, sans-serif" font-size="6.900" letter-spacing="0.3" fill="#152a1e" stroke="#152a1e" stroke-width="0.250">MF</text></svg></span><span class="tab" id="tb2" style="left:446.5px;letter-spacing:0.177px">app\...\AndroidManifest.xml</span>
  <svg class="tx" style="left:616.5px" width="7" height="7" viewBox="0 0 7 7"><path d="M.5 .5l6 6M6.5 .5l-6 6" stroke="#6e7173" stroke-width="1"/></svg>
 </div>
</div>
<div id="caret"></div>
<div id="gutter"></div>
<div class="num" style="top:86px">1</div><div class="num" style="top:109px">2</div><div class="num" style="top:132px">3</div><div class="num" style="top:155px">4</div><div class="num" style="top:178px">5</div><div class="num" style="top:201px">6</div><div class="num" style="top:224px">7</div><div class="num" style="top:247px">8</div><div class="num cur" style="top:270px">9</div>
<div class="cl" style="top:86px"><span id="c1"><span class="k">package</span> com.example.myunitylibrary<span class="k">;</span></span></div><div class="cl" style="top:132px"><span id="c3"><span class="k">public interface</span> <span class="g">UnityCallBackTest</span> {</span></div><div class="cl" style="top:178px"><span id="c5">    <span class="g">public</span> <span class="k">void</span> <span class="g">StringCallback</span>(String str)<span class="k">;</span></span></div><div class="cl" style="top:201px"><span id="c6">    <span class="g">public</span> <span class="k">void</span> <span class="g">IntCallBack</span>(<span class="k">int</span> i)<span class="k">;</span></span></div><div class="cl" style="top:247px"><span id="c8">}</span></div>
<svg class="abs" style="left:890px;top:200px" width="160" height="110" viewBox="890 200 160 110"><path d="M1030 294L921 227" stroke="#ed1c24" stroke-width="4.2" stroke-linecap="round" fill="none"/><path d="M908 217L929.5 220.2L923.5 225.5L919.800 234.5z" fill="#ed1c24"/></svg>
</body></html>
